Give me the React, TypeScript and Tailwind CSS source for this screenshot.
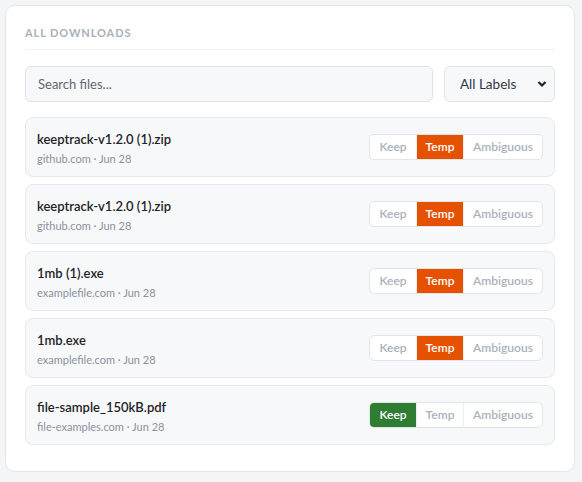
import { useState } from "react";

type Label = "keep" | "temp" | "ambiguous";

interface Download {
  id: number;
  name: string;
  source: string;
  date: string;
  label: Label;
}

const downloads: Download[] = [
  { id: 1, name: "keeptrack-v1.2.0 (1).zip", source: "github.com", date: "Jun 28", label: "temp" },
  { id: 2, name: "keeptrack-v1.2.0 (1).zip", source: "github.com", date: "Jun 28", label: "temp" },
  { id: 3, name: "1mb (1).exe", source: "examplefile.com", date: "Jun 28", label: "temp" },
  { id: 4, name: "1mb.exe", source: "examplefile.com", date: "Jun 28", label: "temp" },
  { id: 5, name: "file-sample_150kB.pdf", source: "file-examples.com", date: "Jun 28", label: "keep" },
];

const options: { value: Label; text: string; active: string; width: string }[] = [
  { value: "keep", text: "Keep", active: "bg-[#2e7d32] text-white", width: "w-[46px]" },
  { value: "temp", text: "Temp", active: "bg-[#e65100] text-white", width: "w-[47px]" },
  { value: "ambiguous", text: "Ambiguous", active: "bg-[#6b7280] text-white", width: "w-[79px]" },
];

function LabelToggle({ value, onChange }: { value: Label; onChange: (l: Label) => void }) {
  return (
    <div className="flex h-[26px] rounded-[5px] border border-[#e1e4e9] bg-white overflow-hidden">
      {options.map((opt, i) => (
        <button
          key={opt.value}
          onClick={() => onChange(opt.value)}
          className={`${opt.width} h-full text-[12px] font-semibold leading-none flex items-center justify-center ${
            i > 0 ? "border-l border-[#eceef1]" : ""
          } ${value === opt.value ? opt.active : "text-[#aab1bc]"}`}
        >
          {opt.text}
        </button>
      ))}
    </div>
  );
}

export default function App() {
  const [items, setItems] = useState(downloads);

  const setLabel = (id: number, label: Label) =>
    setItems((prev) => prev.map((d) => (d.id === id ? { ...d, label } : d)));

  return (
    <div
      className="min-h-screen bg-[#f4f5f7] p-[5px]"
      style={{ fontFamily: 'Lato, "Noto Sans", sans-serif' }}
    >
      <div className="w-[570px] rounded-[10px] border border-[#e4e6ea] bg-white px-[19px] pt-[19px] pb-[26px]">
        <h2 className="text-[11px] font-bold leading-4 tracking-[0.9px] text-[#a9b1bd] pb-2 border-b border-[#eef0f2]">
          ALL DOWNLOADS
        </h2>

        {/* Search + filter */}
        <div className="mt-4 flex gap-[11px]">
          <input
            type="text"
            placeholder="Search files..."
            className="h-9 flex-1 rounded-[6px] border border-[#dfe2e7] bg-[#f7f8fa] px-3 text-[13px] text-[#374151] placeholder:text-[#5f6672] outline-none"
          />
          <div className="relative w-[111px]">
            <select className="h-9 w-full appearance-none rounded-[6px] border border-[#dfe2e7] bg-[#f7f8fa] pl-[15px] text-[13.5px] text-[#2d3748] outline-none">
              <option>All Labels</option>
              <option>Keep</option>
              <option>Temp</option>
              <option>Ambiguous</option>
            </select>
            <svg
              className="pointer-events-none absolute right-[8px] top-[14px] h-[8px] w-[10px]"
              viewBox="0 0 10 8"
              fill="none"
              stroke="#222"
              strokeWidth={2.2}
            >
              <path d="M1.5 2l3.5 3.5L8.5 2" />
            </svg>
          </div>
        </div>

        {/* Download list */}
        <div className="mt-[15px] flex flex-col gap-[7px]">
          {items.map((d) => (
            <div
              key={d.id}
              className="flex h-[60px] items-center justify-between rounded-[8px] border border-[#e6e8ec] bg-[#f7f8fa] px-[11px]"
            >
              <div className="pt-px">
                <div className="text-[13px] font-semibold leading-5 text-[#1f2328]">{d.name}</div>
                <div className="mt-0.5 text-[11px] leading-4 text-[#8b929c]">
                  {d.source} · {d.date}
                </div>
              </div>
              <LabelToggle value={d.label} onChange={(l) => setLabel(d.id, l)} />
            </div>
          ))}
        </div>
      </div>
    </div>
  );
}
